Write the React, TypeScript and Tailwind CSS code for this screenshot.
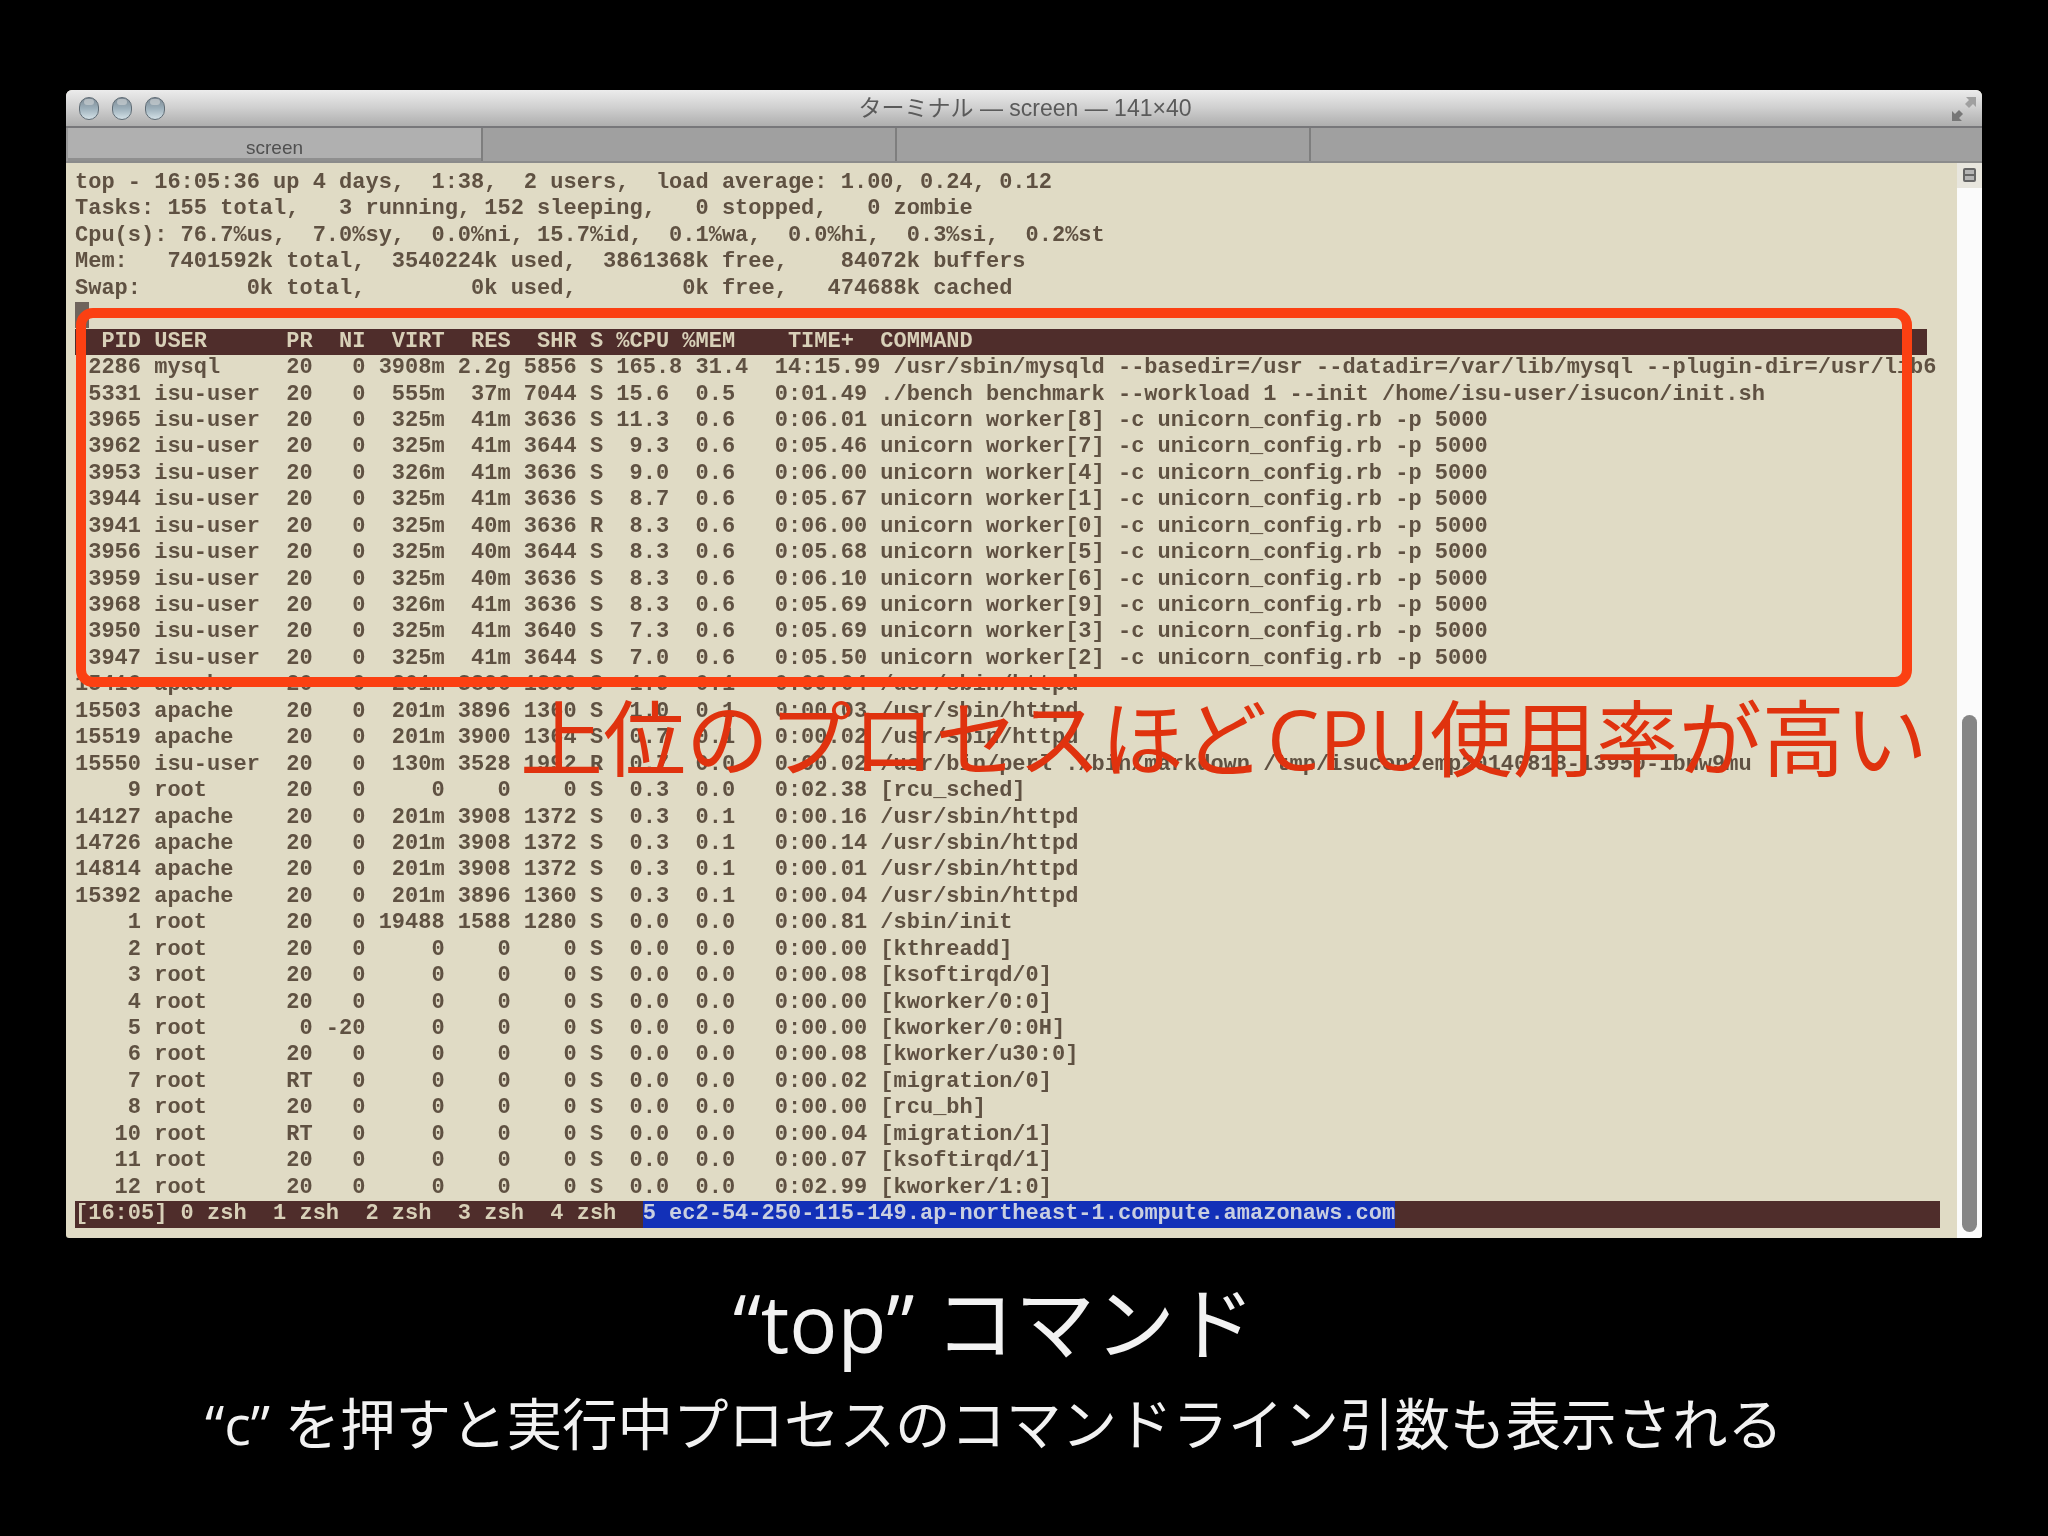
const worker = (id: string, virt: string, res: string, shr: string, st: string, cpu: string, time: string, n: number) =>
  ` ${id} isu-user  20   0  ${virt}m  ${res}m ${shr} ${st} ${cpu}  0.6   ${time} unicorn worker[${n}] -c unicorn_config.rb -p 5000`;

const top = [
  "top - 16:05:36 up 4 days,  1:38,  2 users,  load average: 1.00, 0.24, 0.12",
  "Tasks: 155 total,   3 running, 152 sleeping,   0 stopped,   0 zombie",
  "Cpu(s): 76.7%us,  7.0%sy,  0.0%ni, 15.7%id,  0.1%wa,  0.0%hi,  0.3%si,  0.2%st",
  "Mem:   7401592k total,  3540224k used,  3861368k free,    84072k buffers",
  "Swap:        0k total,        0k used,        0k free,   474688k cached",
];

const rows = [
  " 2286 mysql     20   0 3908m 2.2g 5856 S 165.8 31.4  14:15.99 /usr/sbin/mysqld --basedir=/usr --datadir=/var/lib/mysql --plugin-dir=/usr/lib6",
  " 5331 isu-user  20   0  555m  37m 7044 S 15.6  0.5   0:01.49 ./bench benchmark --workload 1 --init /home/isu-user/isucon/init.sh",
  worker("3965", "325", "41", "3636", "S", "11.3", "0:06.01", 8),
  worker("3962", "325", "41", "3644", "S", " 9.3", "0:05.46", 7),
  worker("3953", "326", "41", "3636", "S", " 9.0", "0:06.00", 4),
  worker("3944", "325", "41", "3636", "S", " 8.7", "0:05.67", 1),
  worker("3941", "325", "40", "3636", "R", " 8.3", "0:06.00", 0),
  worker("3956", "325", "40", "3644", "S", " 8.3", "0:05.68", 5),
  worker("3959", "325", "40", "3636", "S", " 8.3", "0:06.10", 6),
  worker("3968", "326", "41", "3636", "S", " 8.3", "0:05.69", 9),
  worker("3950", "325", "41", "3640", "S", " 7.3", "0:05.69", 3),
  worker("3947", "325", "41", "3644", "S", " 7.0", "0:05.50", 2),
  "15416 apache    20   0  201m 3896 1360 S  1.9  0.1   0:00.04 /usr/sbin/httpd",
  "15503 apache    20   0  201m 3896 1360 S  1.0  0.1   0:00.03 /usr/sbin/httpd",
  "15519 apache    20   0  201m 3900 1364 S  0.7  0.1   0:00.02 /usr/sbin/httpd",
  "15550 isu-user  20   0  130m 3528 1992 R  0.7  0.0   0:00.02 /usr/bin/perl ./bin/markdown /tmp/isucontemp20140818-13950-1bnw9mu",
  "    9 root      20   0     0    0    0 S  0.3  0.0   0:02.38 [rcu_sched]",
  "14127 apache    20   0  201m 3908 1372 S  0.3  0.1   0:00.16 /usr/sbin/httpd",
  "14726 apache    20   0  201m 3908 1372 S  0.3  0.1   0:00.14 /usr/sbin/httpd",
  "14814 apache    20   0  201m 3908 1372 S  0.3  0.1   0:00.01 /usr/sbin/httpd",
  "15392 apache    20   0  201m 3896 1360 S  0.3  0.1   0:00.04 /usr/sbin/httpd",
  "    1 root      20   0 19488 1588 1280 S  0.0  0.0   0:00.81 /sbin/init",
  "    2 root      20   0     0    0    0 S  0.0  0.0   0:00.00 [kthreadd]",
  "    3 root      20   0     0    0    0 S  0.0  0.0   0:00.08 [ksoftirqd/0]",
  "    4 root      20   0     0    0    0 S  0.0  0.0   0:00.00 [kworker/0:0]",
  "    5 root       0 -20     0    0    0 S  0.0  0.0   0:00.00 [kworker/0:0H]",
  "    6 root      20   0     0    0    0 S  0.0  0.0   0:00.08 [kworker/u30:0]",
  "    7 root      RT   0     0    0    0 S  0.0  0.0   0:00.02 [migration/0]",
  "    8 root      20   0     0    0    0 S  0.0  0.0   0:00.00 [rcu_bh]",
  "   10 root      RT   0     0    0    0 S  0.0  0.0   0:00.04 [migration/1]",
  "   11 root      20   0     0    0    0 S  0.0  0.0   0:00.07 [ksoftirqd/1]",
  "   12 root      20   0     0    0    0 S  0.0  0.0   0:02.99 [kworker/1:0]",
];

function Light() {
  return (
    <div className="relative w-[20px] h-[23px] rounded-full border border-[#5f6c75] bg-gradient-to-b from-[#7d8a94] via-[#9db0bb] to-[#d3e0e6] blur-[0.4px]">
      <div className="absolute left-[4px] top-[1px] w-[10px] h-[6px] rounded-full bg-[#c9ced1]/70" />
    </div>
  );
}

function Line({ children }: { children: string }) {
  return <div className="h-[26.45px]">{children}</div>;
}

export default function App() {
  return (
    <div
      className="w-full h-[1536px] bg-black flex flex-col items-center pt-[90px]"
      style={{ fontFamily: '"Open Sans","Noto Sans CJK JP",sans-serif' }}
    >
      <div className="relative w-[1916px] h-[1148px] flex flex-col shrink-0 rounded-t-[6px] rounded-b-[3px] overflow-hidden bg-[#e0dbc5]">
        <div className="relative h-[38px] shrink-0 flex items-center justify-center bg-gradient-to-b from-[#ececec] via-[#cfcfcf] to-[#aeaeae] border-b-2 border-[#77777a]">
          <div className="absolute left-[13px] top-[7px] flex gap-[13px]">
            <Light />
            <Light />
            <Light />
          </div>
          <span
            className="text-[23px] text-[#5a5a5a] blur-[0.5px] pl-[2px]"
            style={{ fontFamily: '"Liberation Sans","Noto Sans CJK JP",sans-serif' }}
          >
            ターミナル — screen — 141×40
          </span>
          <svg className="absolute right-[5px] top-[6px] blur-[0.5px]" width="26" height="26" viewBox="0 0 26 26">
            <path d="M25 1 L15 1 L18 4 L14 8 L18 12 L22 8 L25 11 Z" fill="#a0a0a0" />
            <path d="M1 25 L11 25 L8 22 L12 18 L8 14 L4 18 L1 15 Z" fill="#777777" />
          </svg>
        </div>
        <div className="h-[35px] shrink-0 flex bg-[#a0a0a0] border-b-2 border-[#8b8b8b]">
          <div className="w-[417px] h-[33px] flex items-end justify-center pb-[1px] bg-[#b0b0b0] border-l-2 border-[#999999] border-r-2 border-r-[#7e7e7e] shadow-[inset_0_-3px_0_#8f8f8f]">
            <span
              className="text-[19px] leading-[24px] text-[#505050] blur-[0.4px]"
              style={{ fontFamily: '"Liberation Sans",sans-serif' }}
            >
              screen
            </span>
          </div>
          <div className="w-[414px] h-[33px] border-r-2 border-[#7e7e7e]" />
          <div className="w-[414px] h-[33px] border-r-2 border-[#7e7e7e]" />
        </div>
        <div className="flex-1 flex min-h-0">
          <div
            className="relative flex-1 min-w-0 pl-[9px] pt-[7px] text-[22px] leading-[26.45px] whitespace-pre font-bold text-[#5f5142] blur-[0.7px]"
            style={{ fontFamily: '"Liberation Mono",monospace' }}
          >
            {top.map((t) => (
              <Line key={t}>{t}</Line>
            ))}
            <div className="h-[26.45px]">
              <div className="w-[14px] h-[26px] bg-[#6f645c]" />
            </div>
            <div className="h-[26.45px] w-[1852px] bg-[#4f2d2b] text-[#d8d0b8]">
              {"  PID USER      PR  NI  VIRT  RES  SHR S %CPU %MEM    TIME+  COMMAND"}
            </div>
            {rows.map((t) => (
              <Line key={t}>{t}</Line>
            ))}
            <div className="h-[26.45px] w-[1865px] bg-[#4f2d2b] text-[#d8d0b8] flex">
              <span>{"[16:05] 0 zsh  1 zsh  2 zsh  3 zsh  4 zsh  "}</span>
              <span className="bg-[#1230b8] text-[#c9cfe0]">5 ec2-54-250-115-149.ap-northeast-1.compute.amazonaws.com</span>
            </div>
          </div>
          <div className="w-[25px] shrink-0 flex flex-col items-center justify-between bg-[#fbfbfb] pb-[6px]">
            <div className="w-full h-[25px] pt-[5px] flex justify-center bg-[#e8e6de]">
              <div className="w-[13px] h-[14px] rounded-[2px] bg-[#b5b5b5] border-2 border-[#666666] flex flex-col justify-center">
                <div className="h-[2px] bg-[#666666]" />
              </div>
            </div>
            <div className="w-[15px] h-[517px] rounded-full bg-[#868686]" />
          </div>
        </div>
        <div className="absolute left-[10px] top-[218px] w-[1836px] h-[379px] rounded-[17px] border-[10px] border-[#fb4012]" />
        <div className="absolute left-[454px] top-[586px] text-[83px] leading-[124px] text-[#e0320e] whitespace-nowrap">
          上位のプロセスほどCPU使用率が高い
        </div>
      </div>
      <div className="flex flex-col items-center pr-[60px]">
        <div className="mt-[36px] text-[80px] leading-[96px] text-[#f2f2f2] whitespace-nowrap">“top” コマンド</div>
        <div className="mt-[16px] text-[55.5px] leading-[76px] text-[#f2f2f2] whitespace-nowrap">“c” を押すと実行中プロセスのコマンドライン引数も表示される</div>
      </div>
    </div>
  );
}
